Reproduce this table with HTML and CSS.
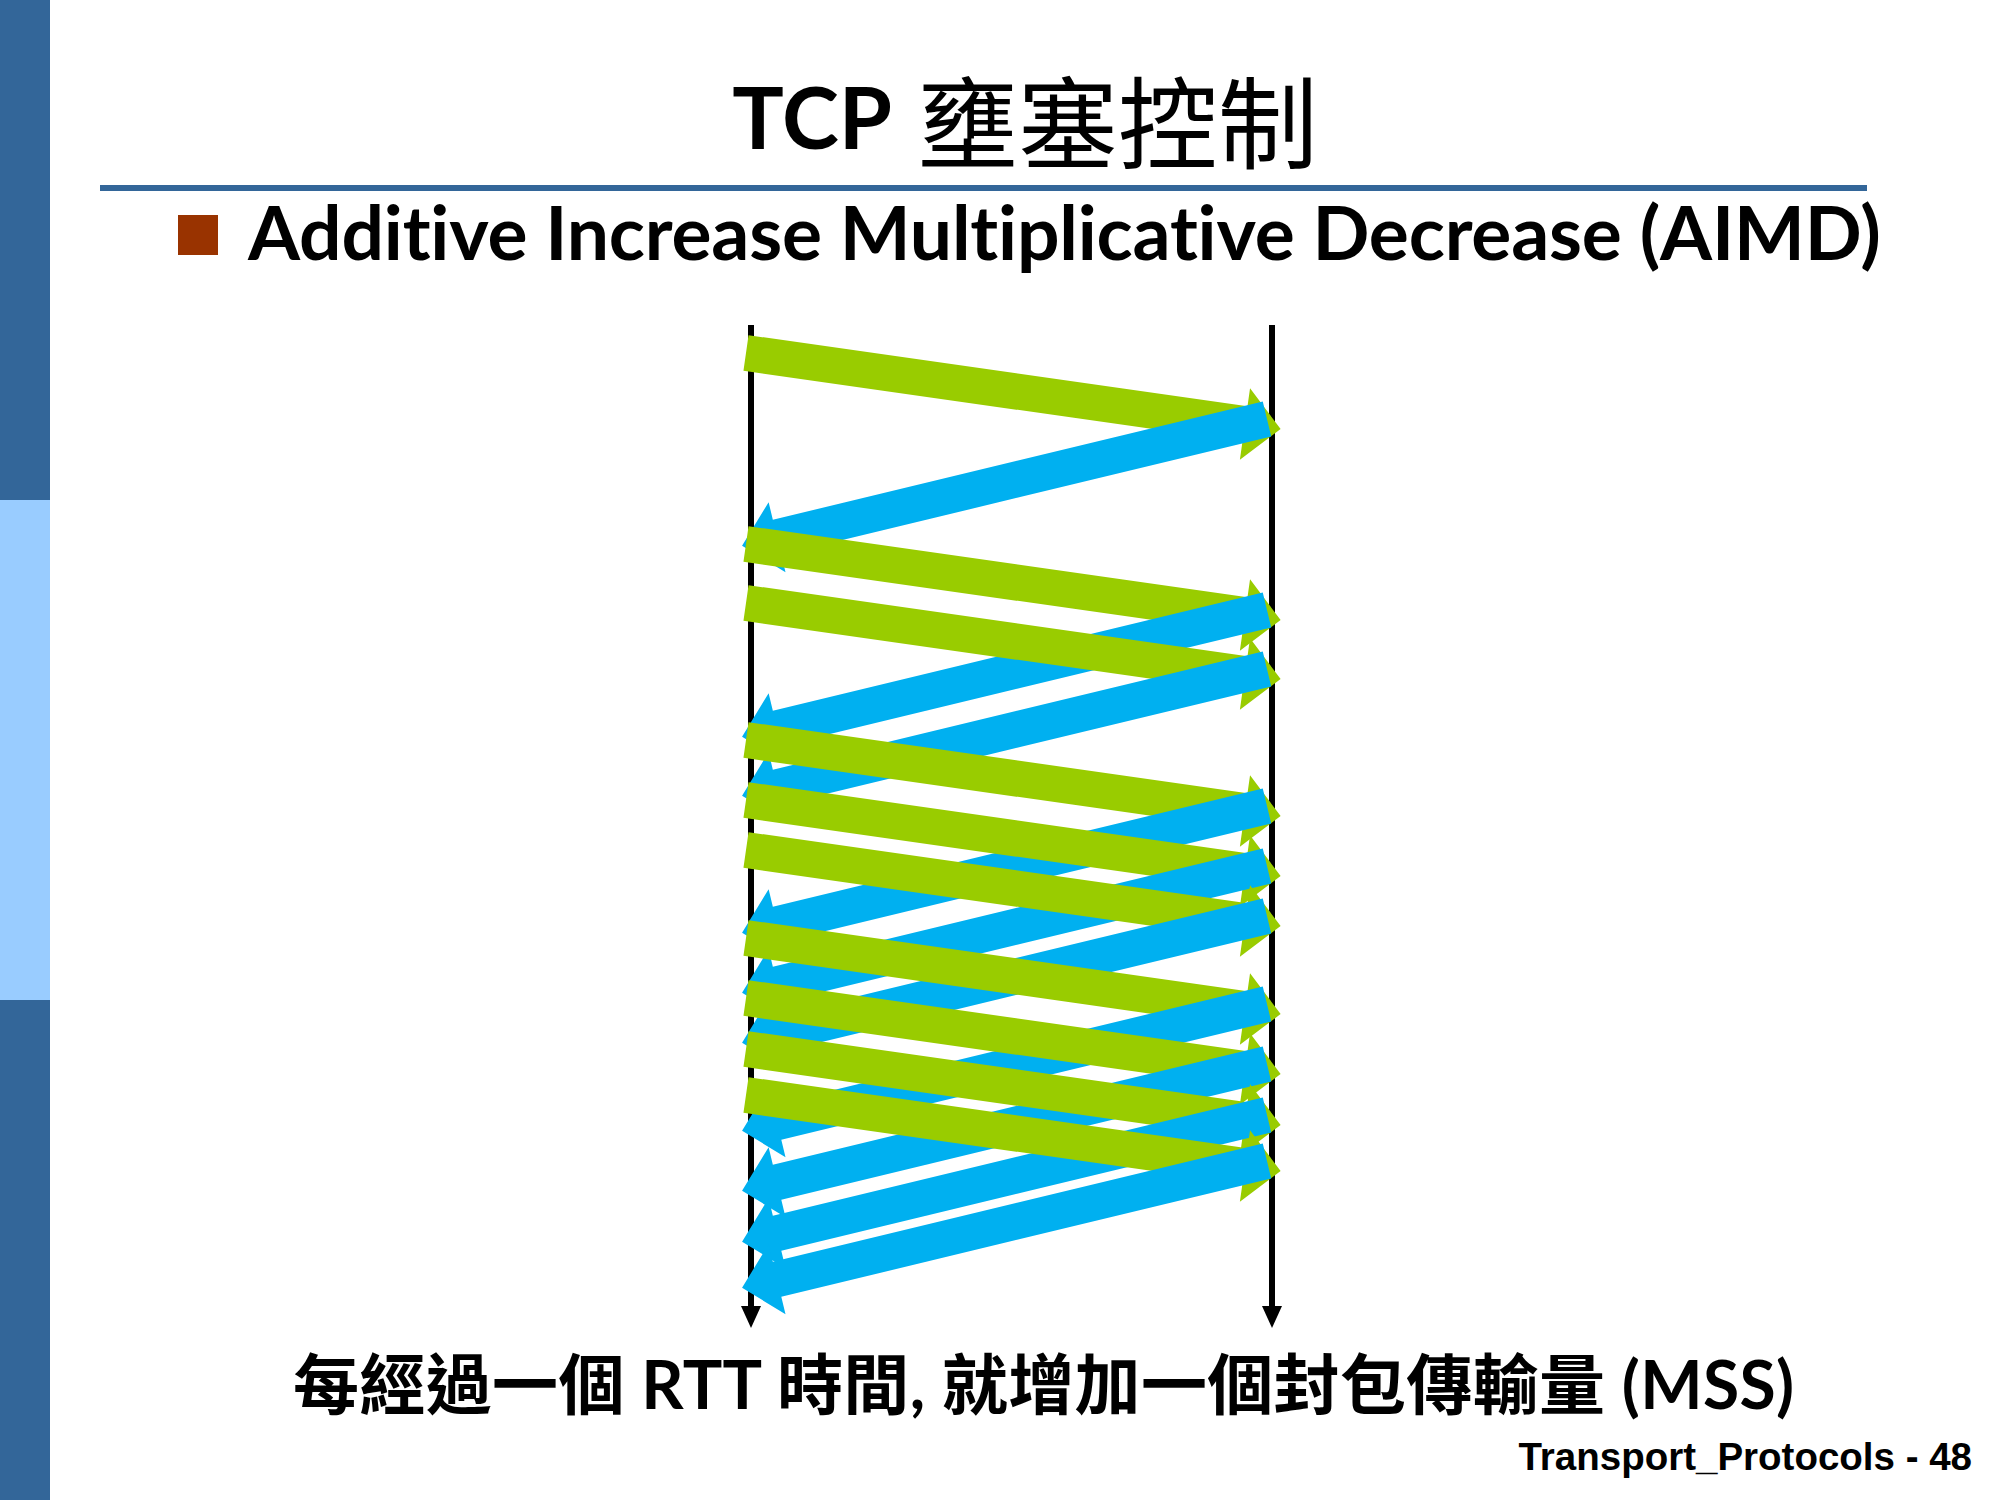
FILE: index.html
```html
<!DOCTYPE html>
<html lang="zh-Hant">
<head>
<meta charset="utf-8">
<title>TCP 壅塞控制</title>
<link rel="stylesheet" href="styles.css">
</head>
<body>
<div class="slide">
  <aside class="sidebar">
    <div class="seg dark"></div>
    <div class="seg light"></div>
    <div class="seg dark"></div>
  </aside>
  <main class="content">
    <h1 class="title"><span class="lat">TCP</span> <span class="cjk">壅塞控制</span></h1>
    <div class="rule"></div>
    <div class="bullet">
      <span class="sq"></span>
      <span class="btext">Additive Increase Multiplicative Decrease (AIMD)</span>
    </div>
    <svg class="diagram" viewBox="720 320 600 1020" width="600" height="1020" xmlns="http://www.w3.org/2000/svg">
      <defs>
        <path id="ar" d="M0,-18 H504 V-36 L540,0 L504,36 V18 H0 Z"/>
      </defs>
      <g class="axis">
        <rect x="748" y="325" width="6" height="985"/>
        <polygon points="741,1306 761,1306 751,1328"/>
        <rect x="1269" y="325" width="6" height="985"/>
        <polygon points="1262,1306 1282,1306 1272,1328"/>
      </g>
      <use href="#ar" class="g" transform="translate(746 353) rotate(8.1)"/>
      <use href="#ar" class="b" transform="translate(1267 419) rotate(166.43)"/>
      <use href="#ar" class="g" transform="translate(746 544) rotate(8.1)"/>
      <use href="#ar" class="b" transform="translate(1267 610) rotate(166.43)"/>
      <use href="#ar" class="g" transform="translate(746 603) rotate(8.1)"/>
      <use href="#ar" class="b" transform="translate(1267 669) rotate(166.43)"/>
      <use href="#ar" class="g" transform="translate(746 740) rotate(8.1)"/>
      <use href="#ar" class="b" transform="translate(1267 806) rotate(166.43)"/>
      <use href="#ar" class="g" transform="translate(746 800) rotate(8.1)"/>
      <use href="#ar" class="b" transform="translate(1267 866) rotate(166.43)"/>
      <use href="#ar" class="g" transform="translate(746 850) rotate(8.1)"/>
      <use href="#ar" class="b" transform="translate(1267 916) rotate(166.43)"/>
      <use href="#ar" class="g" transform="translate(746 938) rotate(8.1)"/>
      <use href="#ar" class="b" transform="translate(1267 1004) rotate(166.43)"/>
      <use href="#ar" class="g" transform="translate(746 998) rotate(8.1)"/>
      <use href="#ar" class="b" transform="translate(1267 1064) rotate(166.43)"/>
      <use href="#ar" class="g" transform="translate(746 1049) rotate(8.1)"/>
      <use href="#ar" class="b" transform="translate(1267 1115) rotate(166.43)"/>
      <use href="#ar" class="g" transform="translate(746 1095) rotate(8.1)"/>
      <use href="#ar" class="b" transform="translate(1267 1161) rotate(166.43)"/>
    </svg>
    <p class="caption">每經過一個 <span class="lat">RTT</span> 時間, 就增加一個封包傳輸量 <span class="lat">(MSS)</span></p>
    <div class="footer">Transport_Protocols - 48</div>
  </main>
</div>
</body>
</html>
```

FILE: styles.css
```css
html, body {
  margin: 0;
  padding: 0;
  background: #ffffff;
}

.slide {
  width: 2000px;
  height: 1500px;
  display: flex;
  background: #ffffff;
  overflow: hidden;
  color: #000000;
}

.sidebar {
  width: 50px;
  flex: none;
  display: flex;
  flex-direction: column;
}

.seg {
  height: 500px;
}

.dark {
  background: #336699;
}

.light {
  background: #99ccff;
}

.content {
  flex: 1;
  display: flex;
  flex-direction: column;
  align-items: flex-start;
}

.title {
  margin: 0;
  width: 100%;
  box-sizing: border-box;
  height: 185px;
  padding-top: 60px;
  text-align: center;
  font-family: "Lato", "Noto Sans CJK TC", sans-serif;
  font-size: 100px;
  line-height: 100px;
  font-weight: 400;
  white-space: nowrap;
}

.title .lat {
  font-weight: 700;
  font-size: 86px;
}

.title .cjk {
  font-family: "Noto Sans CJK TC", sans-serif;
  font-weight: 400;
  vertical-align: -12px;
}

.rule {
  margin-left: 50px;
  width: 1767px;
  height: 6px;
  background: #336699;
}

.bullet {
  display: flex;
  align-items: flex-start;
  margin-left: 128px;
  margin-top: 3px;
  gap: 30px;
}

.sq {
  width: 40px;
  height: 40px;
  margin-top: 21px;
  background: #993300;
  flex: none;
}

.btext {
  font-family: "Lato", sans-serif;
  font-weight: 700;
  font-size: 75px;
  line-height: 75px;
  letter-spacing: -0.2px;
  font-variant-ligatures: none;
  white-space: nowrap;
}

.diagram {
  display: block;
  margin-left: 670px;
  margin-top: 51px;
}

.axis {
  fill: #000000;
}

.g {
  fill: #99cc00;
}

.b {
  fill: #00b0f0;
}

.caption {
  margin: 11px 0 0 243px;
  font-family: "Lato", "Noto Sans CJK TC", sans-serif;
  font-weight: 700;
  font-size: 66px;
  line-height: 66px;
  letter-spacing: 0.35px;
  white-space: nowrap;
}

.footer {
  align-self: flex-end;
  margin-right: 28px;
  margin-top: 21px;
  font-family: "Liberation Sans", Arial, sans-serif;
  font-weight: 700;
  font-size: 38.5px;
  line-height: 38px;
  white-space: nowrap;
}
```
